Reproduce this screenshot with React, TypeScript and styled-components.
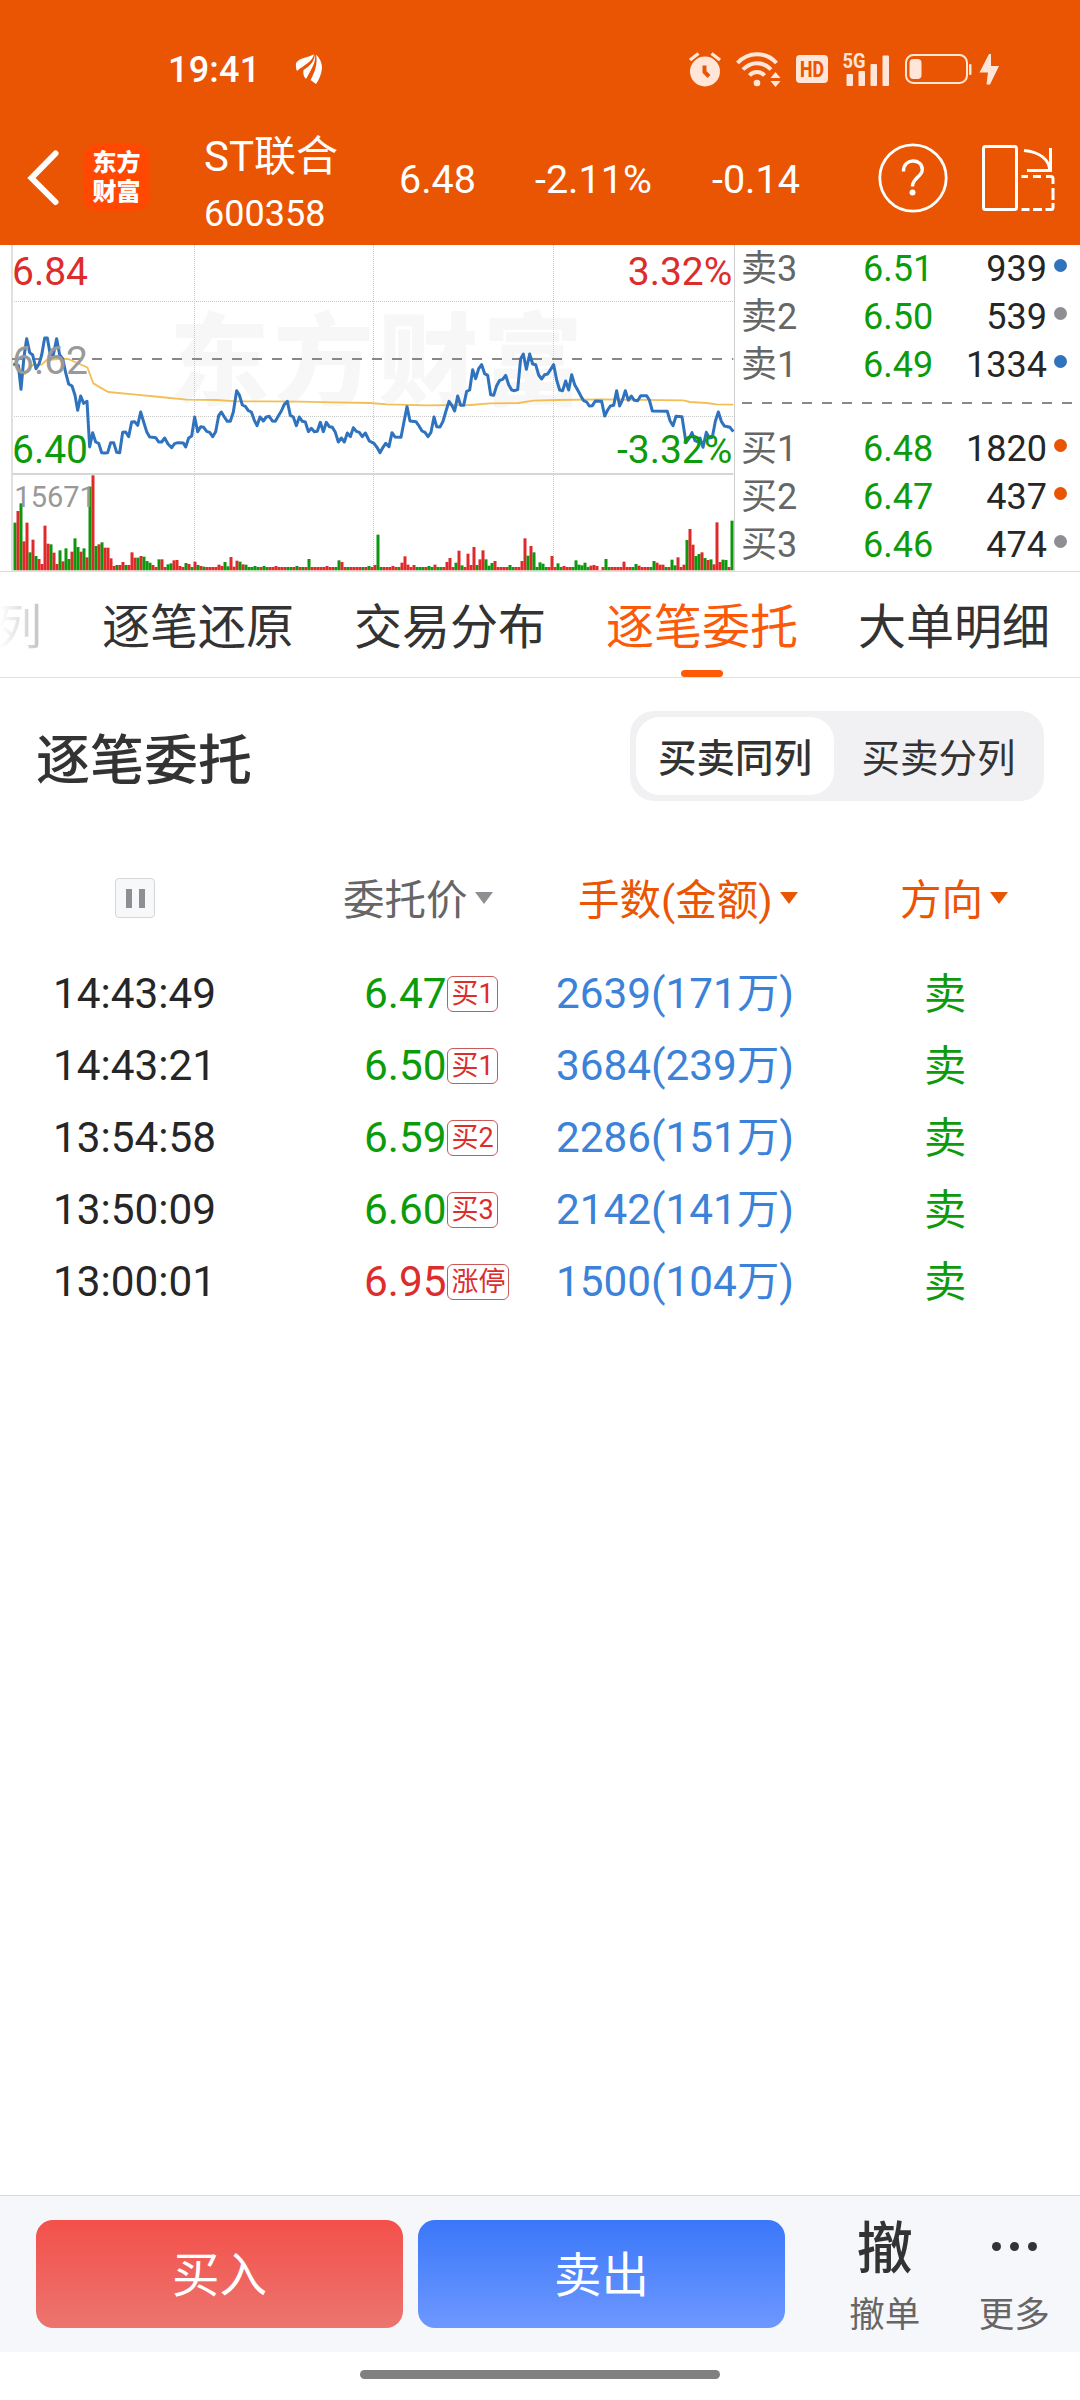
import React from "react";
import styled, { createGlobalStyle } from "styled-components";

const GREEN = "#0b9b0b";
const RED = "#dd2c2c";
const BRAND = "#ea5504";
const BLUE = "#2f72bd";

const GlobalStyle = createGlobalStyle`
  * { box-sizing: border-box; }
  body {
    margin: 0;
    background: #fff;
    font-family: Roboto, "Noto Sans CJK SC", sans-serif;
    color: #262626;
  }
  svg { overflow: visible; }
`;

const Screen = styled.div`
  width: 1080px;
  height: 2400px;
  display: flex;
  flex-direction: column;
  background: #fff;
  overflow: hidden;
`;

/* ---------- header ---------- */

const Header = styled.header`
  height: 245px;
  flex: none;
  background: ${BRAND};
  color: #fff;
  display: flex;
  flex-direction: column;
`;

const StatusBar = styled.div`
  height: 110px;
  padding: 28px 80px 0 168px;
  display: flex;
  align-items: center;
  justify-content: space-between;
`;

const StatusGroup = styled.div<{ $gap: number }>`
  display: flex;
  align-items: center;
  gap: ${(p) => p.$gap}px;
  color: #ffe6d9;
`;

const Clock = styled.span`
  font-size: 36px;
  line-height: 40px;
  font-weight: 500;
  color: #fff;
  padding-top: 2px;
  letter-spacing: 0.2px;
`;

const NavBar = styled.div`
  height: 135px;
  display: grid;
  grid-template-columns: 83px 121px 172px 125px 158px 219px 104px 1fr;
  align-items: center;
`;

const NavSlot = styled.div<{ $left?: number }>`
  display: flex;
  padding-left: ${(p) => p.$left ?? 0}px;
`;

const AppLogo = styled.div`
  width: 67px;
  height: 67px;
  padding-bottom: 5px;
  border-radius: 15px;
  background: #ff4800;
  display: flex;
  flex-direction: column;
  align-items: center;
  justify-content: center;
  gap: 4px;
  font: 900 24px/25px "Noto Sans CJK SC", sans-serif;
`;

const StockTitle = styled.div`
  display: flex;
  flex-direction: column;
  padding-top: 10px;
`;

const StockName = styled.span`
  font-size: 42px;
  line-height: 60px;
  height: 62px;
`;

const StockCode = styled.span`
  font-size: 36px;
  line-height: 50px;
  height: 50px;
`;

const Quote = styled.span`
  font-size: 39.5px;
  line-height: 50px;
  padding-top: 5px;
  white-space: nowrap;
`;

/* ---------- market panel ---------- */

const Market = styled.section`
  height: 327px;
  flex: none;
  display: flex;
  border-bottom: 1px solid #dcdcdc;
`;

const ChartBox = styled.div`
  width: 735px;
  height: 326px;
  flex: none;
  border-right: 1px solid #cfcfcf;
`;

const Book = styled.div`
  width: 345px;
  flex: none;
  display: flex;
  flex-direction: column;
  padding: 0 13px 0 6px;
`;

const BookRow = styled.div`
  height: 48px;
  display: grid;
  grid-template-columns: 122px 184px 13px;
  align-items: center;
  font-size: 36px;
  line-height: 48px;
`;

const BookLabel = styled.span`
  height: 48px;
  color: #666;
`;

const BookPair = styled.span`
  display: flex;
  justify-content: space-between;
  padding-right: 0;
`;

const BookPrice = styled.span`
  color: ${GREEN};
`;

const Dot = styled.i<{ $color: string }>`
  width: 13px;
  height: 13px;
  border-radius: 50%;
  background: ${(p) => p.$color};
  margin: -7px 0 0 7px;
`;

const BookDivider = styled.div`
  height: 36px;
  padding-top: 13px;
  &::before {
    content: "";
    display: block;
    width: 330px;
    margin-left: 1px;
    height: 2px;
    background: repeating-linear-gradient(90deg, #888 0 10px, transparent 10px 20px);
  }
`;

/* ---------- tabs ---------- */

const Tabs = styled.nav`
  height: 106px;
  flex: none;
  display: flex;
  gap: 60px;
  border-bottom: 1px solid #e0e0e0;
  overflow: hidden;
  font-size: 48px;
  line-height: 112px;
  color: #333;
`;

const Tab = styled.div<{ $active?: boolean; $peek?: boolean }>`
  width: ${(p) => (p.$peek ? 42 : 192)}px;
  flex: none;
  height: 105px;
  white-space: nowrap;
  display: flex;
  flex-direction: column;
  align-items: ${(p) => (p.$peek ? "flex-end" : "center")};
  color: ${(p) => (p.$active ? "#fa5a0a" : "inherit")};
  ${(p) =>
    p.$peek &&
    "background: linear-gradient(90deg, #fff 0, #c4c4c4 40px); background-clip: text; color: transparent;"}
`;

const TabText = styled.span`
  height: 98px;
`;

const TabMark = styled.i`
  width: 42px;
  height: 7px;
  border-radius: 4px;
  background: #ff5a08;
`;

/* ---------- orders ---------- */

const TitleRow = styled.div`
  height: 90px;
  flex: none;
  margin: 33px 36px 0;
  display: flex;
  justify-content: space-between;
  align-items: center;
`;

const Title = styled.h1`
  margin: 0;
  padding-top: 11px;
  font-size: 54px;
  line-height: 80px;
  font-weight: 500;
  color: #333;
`;

const Segmented = styled.div`
  width: 414px;
  height: 90px;
  padding: 6px;
  border-radius: 24px;
  background: #f1f1f4;
  display: flex;
`;

const Segment = styled.div<{ $on?: boolean }>`
  flex: ${(p) => (p.$on ? "0 0 198px" : "1")};
  height: 78px;
  border-radius: 24px;
  background: ${(p) => (p.$on ? "#fff" : "transparent")};
  font-size: 38.5px;
  line-height: 83px;
  font-weight: ${(p) => (p.$on ? 500 : 400)};
  text-align: center;
  padding-left: ${(p) => (p.$on ? 0 : 5)}px;
  color: #333;
`;

const OrderTable = styled.div`
  flex: 1;
  padding-top: 61px;
`;

const HeadRow = styled.div`
  height: 72px;
  display: grid;
  grid-template-columns: 343px 235px 322px 1fr;
  align-items: center;
  margin-bottom: 24px;
`;

const PauseButton = styled.div`
  width: 40px;
  height: 40px;
  margin-left: 115px;
  border: 1px solid #d6d7db;
  border-radius: 4px;
  background: #f7f8fa;
  display: flex;
  align-items: center;
  justify-content: center;
  gap: 7px;
  &::before, &::after {
    content: "";
    width: 6px;
    height: 19px;
    background: #8e8e93;
  }
`;

const HeadCell = styled.div<{ $active?: boolean }>`
  display: flex;
  align-items: center;
  gap: 7px;
  padding-top: 5px;
  font-size: 41.5px;
  line-height: 60px;
  height: 65px;
  white-space: nowrap;
  color: ${(p) => (p.$active ? BRAND : "#666")};
  &::after {
    content: "";
    border: 9px solid transparent;
    border-top: 12px solid ${(p) => (p.$active ? BRAND : "#8e8e93")};
    border-bottom: 0;
    margin-top: -6px;
  }
`;

const OrderRow = styled.div`
  height: 72px;
  display: grid;
  grid-template-columns: 311px 192px 368px 1fr;
  align-items: center;
  padding-left: 53px;
  font-size: 42.3px;
  line-height: 72px;
`;

const Cell = styled.div<{ $color?: string; $down?: number }>`
  height: 72px;
  display: flex;
  align-items: center;
  padding-top: ${(p) => p.$down ?? 0}px;
  white-space: nowrap;
  color: ${(p) => p.$color ?? "#262626"};
`;

const Badge = styled.span`
  height: 36px;
  margin: 0 0 0 1px;
  padding: 0 3px;
  border: 1px solid #c85a5a;
  border-radius: 6px;
  font-size: 27px;
  line-height: 35px;
  color: ${RED};
`;

/* ---------- footer ---------- */

const ActionBar = styled.footer`
  height: 157px;
  flex: none;
  border-top: 1px solid #d8d9db;
  background: #f6f7fa;
  display: flex;
  padding: 24px 0 0 36px;
`;

const TradeButton = styled.div<{ $from: string; $to: string }>`
  width: 367px;
  height: 108px;
  flex: none;
  margin-right: 15px;
  border-radius: 17px;
  background: linear-gradient(${(p) => p.$from}, ${(p) => p.$to});
  color: #fff;
  font-size: 47.5px;
  line-height: 113px;
  text-align: center;
`;

const Tools = styled.div`
  flex: 1;
  display: flex;
  padding-left: 20px;
`;

const Tool = styled.div`
  width: 129.5px;
  display: flex;
  flex-direction: column;
  align-items: center;
  font-size: 35.500px;
  line-height: 50px;
  color: #666;
`;

const ToolIcon = styled.span`
  height: 68px;
  display: flex;
  align-items: center;
  gap: 9px;
  font-size: 56px;
  line-height: 54px;
  font-weight: 500;
  color: #333;
  margin-top: -5px;
  margin-bottom: 7px;
`;

const MoreDot = styled.i`
  width: 9px;
  height: 9px;
  margin-top: -6px;
  border-radius: 50%;
  background: #333;
`;

const HomeArea = styled.div`
  height: 48px;
  flex: none;
  display: flex;
  justify-content: center;
  padding-top: 18px;
`;

const HomeBar = styled.i`
  width: 360px;
  height: 9px;
  border-radius: 5px;
  background: #808080;
`;

/* ---------- chart data: plot units are thirds of a pixel ---------- */

const PRICE =
  "40,372 48,374 55,376 63,448 72,350 80,296 89,338 98,345 108,386 117,372 125,345 134,294 142,294 151,345 160,345 170,296 179,345 188,356 197,398 206,432 216,438 225,466 233,511 242,468 251,490 261,484 269,621 278,578 287,606 296,610 305,638 314,639 323,638 332,608 341,608 350,637 359,638 368,577 377,576 386,590 395,546 404,545 413,556 422,516 431,546 440,575 449,591 458,592 467,593 476,606 485,606 494,594 504,612 515,623 524,611 534,608 550,609 557,621 566,594 575,588 584,531 593,575 602,560 611,562 620,574 629,577 638,590 647,575 656,527 664,516 673,531 682,544 691,544 700,516 710,452 718,465 727,495 736,499 745,512 754,516 763,541 771,557 780,531 790,543 799,531 808,529 817,543 826,544 835,528 844,513 853,493 862,484 871,526 880,531 889,557 898,531 907,544 916,546 925,575 934,565 943,575 952,574 961,547 970,575 979,547 988,560 997,562 1006,577 1015,606 1024,594 1033,606 1042,579 1051,590 1060,563 1069,574 1078,577 1087,590 1096,579 1108,603 " +
  "1122,610 1131,622 1140,638 1149,622 1157,610 1167,620 1176,578 1185,591 1203,592 1212,545 1221,500 1230,543 1248,545 1257,558 1266,573 1275,577 1284,590 1293,577 1302,531 1310,560 1320,561 1329,544 1338,513 1347,484 1356,497 1364,513 1373,468 1382,496 1391,496 1400,454 1409,450 1418,389 1427,416 1436,386 1445,374 1454,401 1463,406 1472,464 1481,466 1490,437 1499,421 1508,418 1517,406 1526,434 1535,450 1544,452 1553,449 1562,356 1570,342 1579,388 1589,342 1598,372 1607,374 1616,405 1625,417 1634,404 1643,402 1652,388 1661,374 1670,420 1679,450 1688,452 1697,423 1706,450 1715,404 1724,434 1733,450 1742,467 1751,482 1760,486 1768,498 1777,497 1786,483 1805,484 1814,528 1823,510 1831,498 1841,496 1850,452 1859,498 1868,478 1876,452 1885,481 1894,468 1903,481 1913,482 1922,467 1940,467 1948,480 1957,513 2002,514 2010,542 2019,557 2028,529 2046,530 2058,608 2067,596 2076,578 2085,602 2094,606 2100,594 2109,622 2119,577 2128,594 2137,592 2146,544 2155,516 2164,544 2173,558 2190,562 2200,575";

const AVERAGE =
  "40,372 55,376 65,400 75,402 85,386 100,374 125,374 140,360 175,357 205,357 225,366 262,382 280,430 300,442 325,456 400,463 480,471 560,479 650,480 710,484 800,484 900,485 1000,487 1110,489 1160,493 1280,496 1410,495 1470,490 1555,489 1600,482 1670,480 1810,478 2050,481 2070,486 2120,489 2150,493 2200,494";

/* opening minutes: colour letter + bar height */
const VOLUME_OPEN =
  "g142 r177 g200 r86 r142 g53 r91 g42 r33 r18 r133 r79 g77 r52 r18 g59 r26 g65 g33 r55 g95 g69 r55 g65 r38 g250 r284 g72 r77 g83 r67 r67 r35 r12 g15 r15 r24 g15 r15 r53 r37 g37 r42 g40 g27 g22 r15 r9 g32 r32 r9 g17 g20 r29 r30 r12 r9 g21 r18 g9 r25 g15 r12 g10 r9 r9 r9 r9 r16 r12 g24 g11 r39 r10 r28 g25 r17 g16 g9 g9";

const SPIKES: Record<number, [string, number]> = {
  80: ["g", 12], 83: ["g", 12], 87: ["r", 12], 94: ["g", 12], 98: ["g", 33], 104: ["r", 12],
  108: ["g", 29], 109: ["r", 24], 118: ["g", 12], 120: ["r", 15], 121: ["g", 106], 126: ["r", 12],
  129: ["r", 22], 130: ["r", 41], 131: ["r", 16], 133: ["r", 15], 138: ["g", 12], 140: ["r", 16],
  144: ["r", 24], 145: ["r", 36], 147: ["g", 22], 148: ["r", 58], 149: ["g", 14], 151: ["r", 49],
  152: ["r", 15], 153: ["r", 69], 154: ["g", 15], 155: ["r", 32], 156: ["r", 59], 157: ["g", 32],
  158: ["g", 13], 159: ["g", 21], 160: ["r", 27], 165: ["g", 15], 169: ["r", 27], 170: ["r", 95],
  171: ["g", 43], 172: ["r", 72], 173: ["g", 53], 175: ["g", 23], 176: ["g", 19], 179: ["r", 42],
  181: ["g", 20], 183: ["r", 12], 187: ["g", 29], 188: ["g", 16], 189: ["g", 14], 190: ["g", 22],
  192: ["r", 13], 193: ["r", 15], 194: ["r", 12], 195: ["r", 0], 197: ["g", 33], 203: ["r", 25],
  207: ["g", 18], 208: ["r", 13], 213: ["g", 27], 214: ["r", 22], 215: ["r", 16], 216: ["r", 16],
  219: ["g", 31], 220: ["g", 14], 221: ["r", 38], 223: ["r", 16], 224: ["g", 90], 225: ["r", 123],
  226: ["r", 76], 227: ["g", 42], 228: ["g", 48], 229: ["r", 53], 230: ["g", 36], 231: ["r", 30],
  232: ["g", 32], 233: ["r", 17], 234: ["r", 143], 235: ["r", 24], 236: ["g", 31], 237: ["g", 30],
  238: ["r", 9], 239: ["g", 148],
};

const QUIET_GREEN = new Set([79, 81, 84, 91, 92, 96, 107, 111, 116, 122, 128, 134, 135, 136, 139, 141, 142, 166, 174, 177, 182, 186, 191, 198, 206, 212, 217]);

const volumeBars = (() => {
  const open = VOLUME_OPEN.split(" ").map((t): [string, number] => [t[0], Number(t.slice(1))]);
  return Array.from({ length: 240 }, (_, i): [string, number] =>
    open[i] && i < 80 ? open[i] : SPIKES[i] ?? [QUIET_GREEN.has(i) ? "g" : "r", 9]
  );
})();

const barColor = (c: string) => (c === "g" ? "#0f960f" : "#e02a2a");

function PriceChart() {
  return (
    <svg width="734" height="326" viewBox="0 15 2202 978" fontFamily="Roboto, sans-serif">
      <text x="508" y="470" fontSize="300" fontWeight="900" fontFamily="'Noto Sans CJK SC', sans-serif" fill="#f7f7f7" textLength="1240">
        东方财富
      </text>
      <g stroke="#c9c9c9" strokeWidth="3" strokeDasharray="3 3">
        <path d="M36 184.500H2200M36 529.500H2200M583.500 15V990M1120.500 15V990M1660.500 15V990" />
      </g>
      <path d="M36 15V993" stroke="#e0e0e0" strokeWidth="6" />
      <path d="M36 702H2200" stroke="#d6d6d6" strokeWidth="6" />
      <path d="M36 357H2200" stroke="#888" strokeWidth="6" strokeDasharray="30 30" />
      {volumeBars.map(([c, h], i) => (
        <g key={i} fill={barColor(c)}>
          <rect x={40.5 + i * 9} y={990 - h} width="9" height={h} />
          <rect x={40.5 + i * 9} y="990" width="9" height="3" opacity="0.3" />
        </g>
      ))}
      <polyline points={AVERAGE} fill="none" stroke="#f3bf55" strokeWidth="5.500" />
      <polyline points={PRICE} fill="none" stroke={BLUE} strokeWidth="9" strokeLinejoin="round" />
      <g fontSize="117">
        <text x="36" y="134" fill={RED}>6.84</text>
        <text x="2197" y="134" fill={RED} textAnchor="end">3.32%</text>
        <text x="36" y="401" fill="#999">6.62</text>
        <text x="36" y="668" fill={GREEN}>6.40</text>
        <text x="2197" y="668" fill={GREEN} textAnchor="end">-3.32%</text>
        <text x="43" y="800" fill="#999" fontSize="87">15671</text>
      </g>
    </svg>
  );
}

/* ---------- icons ---------- */

const LeafIcon = () => (
  <svg width="26" height="30" viewBox="0 0 26 30" fill="#fff">
    <path d="M0 9C4 3.500 11 4 18 .3 16.500 8 8 11 1 17 0 15-.3 12 0 9z" />
    <path d="M19 .5C20.300 8 15.500 15 10 25 7.300 22.500 7 19 7.500 16 14 12 18 8 19 .5z" />
    <path d="M20.200 .5C24 4 26 9 26 14 25.500 20 23 26 20 30 18 28.500 16.500 27.500 14.500 26 19.500 17 21.500 10 20.200 .5z" />
  </svg>
);

const AlarmIcon = () => (
  <svg width="32" height="35" viewBox="0 0 32 35" fill="none" stroke="currentColor">
    <circle cx="16" cy="19.500" r="15" fill="currentColor" stroke="none" />
    <path d="M1 8 9.500 1.500M31 8 22.500 1.500" strokeWidth="3.400" />
    <path d="M15.500 13.500V20l4.500 4.500" stroke={BRAND} strokeWidth="4" />
  </svg>
);

const WifiIcon = () => (
  <svg width="45" height="35" viewBox="0 0 45 35" fill="none" stroke="currentColor" strokeWidth="4">
    <path d="M1.500 11C12-.8 30-.8 40.500 11M7 17.500c8-8.500 20-8.500 28 0M13.500 23.500c4-4.600 11-4.600 15 0" />
    <circle cx="21" cy="31" r="3.300" fill="currentColor" stroke="none" />
    <path d="M34.500 26h10L39.500 20zM34.500 29h10L39.500 35z" fill="currentColor" stroke="none" />
  </svg>
);

const HdIcon = () => (
  <svg width="32" height="28" viewBox="0 0 32 28">
    <rect width="32" height="28" rx="4" fill="currentColor" />
    <text x="4" y="21.800" fontSize="22" fontWeight="800" fontFamily="Roboto, sans-serif" fill={BRAND} textLength="24" lengthAdjust="spacingAndGlyphs">
      HD
    </text>
  </svg>
);

const SignalIcon = () => (
  <svg width="47" height="33" viewBox="0 0 47 33" fill="currentColor">
    <text x="-0.500" y="15" fontSize="20" fontWeight="700" fontFamily="Roboto, sans-serif" textLength="23" lengthAdjust="spacingAndGlyphs">
      5G
    </text>
    <rect x="3.500" y="21" width="6.500" height="12" rx="1" />
    <rect x="15.500" y="18" width="6.500" height="15" rx="1" />
    <rect x="27.500" y="11" width="6.500" height="22" rx="1" />
    <rect x="39.500" y="2.500" width="6.500" height="30.500" rx="1" />
  </svg>
);

const BatteryIcon = () => (
  <svg width="95" height="31" viewBox="0 0 95 31">
    <rect x="1" y="1" width="61" height="28" rx="7.500" fill="none" stroke="currentColor" strokeWidth="2" />
    <rect x="4.500" y="5" width="12" height="20" rx="4" fill="currentColor" />
    <rect x="64" y="10" width="2.500" height="11" rx="1" fill="currentColor" />
    <path d="M84 0 74.500 18.500H83L81.500 30.500H85L94 12H86V0z" fill="currentColor" />
  </svg>
);

const BackIcon = () => (
  <svg width="34" height="56" viewBox="0 0 34 56" fill="none" stroke="#fff" strokeWidth="6" strokeLinecap="round" strokeLinejoin="miter">
    <path d="M29.500 3.500 5.500 28 29.500 52" />
  </svg>
);

const HelpIcon = () => (
  <svg width="70" height="70" viewBox="0 0 70 70" fill="none" stroke="#fff">
    <circle cx="35" cy="35" r="33.200" strokeWidth="2.800" />
    <path d="M25.500 28.500C25 14.500 44.500 15 44.300 26.500 44.200 34 34.500 34.500 34.500 43.500" strokeWidth="3.400" />
    <circle cx="34.500" cy="49.500" r="3" fill="#fff" stroke="none" />
  </svg>
);

const RotateIcon = () => (
  <svg width="74" height="68" viewBox="0 0 74 68" fill="none" stroke="#fff" strokeWidth="3">
    <rect x="1.500" y="2.500" width="33" height="63" rx="2" />
    <path d="M42 6.500C57 8 67 15 68 27M68.500 4V28M45 26.500H70" />
    <path d="M39.500 32.500h6.500M51 32.500h8M64 32.500h5a2 2 0 0 1 2 2V40M71 44v12M39.500 65.500h8M51 65.500h9M63.500 65.500h5.500a2 2 0 0 0 2-2V59" />
  </svg>
);

/* ---------- content ---------- */

const book = {
  asks: [
    ["卖3", "6.51", "939", BLUE],
    ["卖2", "6.50", "539", "#8e8e93"],
    ["卖1", "6.49", "1334", BLUE],
  ],
  bids: [
    ["买1", "6.48", "1820", BRAND],
    ["买2", "6.47", "437", BRAND],
    ["买3", "6.46", "474", "#8e8e93"],
  ],
};

const orders = [
  { time: "14:43:49", price: "6.47", tag: "买1", size: "2639(171万)" },
  { time: "14:43:21", price: "6.50", tag: "买1", size: "3684(239万)" },
  { time: "13:54:58", price: "6.59", tag: "买2", size: "2286(151万)" },
  { time: "13:50:09", price: "6.60", tag: "买3", size: "2142(141万)" },
  { time: "13:00:01", price: "6.95", tag: "涨停", size: "1500(104万)", up: true },
];

const BookRows = ({ rows }: { rows: string[][] }) => (
  <>
    {rows.map(([label, price, qty, color]) => (
      <BookRow key={label}>
        <BookLabel>{label}</BookLabel>
        <BookPair>
          <BookPrice>{price}</BookPrice>
          <span>{qty}</span>
        </BookPair>
        <Dot $color={color} />
      </BookRow>
    ))}
  </>
);

export default function App() {
  return (
    <>
      <GlobalStyle />
      <Screen>
        <Header>
          <StatusBar>
            <StatusGroup $gap={36}>
              <Clock>19:41</Clock>
              <LeafIcon />
            </StatusGroup>
            <StatusGroup $gap={15}>
              <AlarmIcon />
              <WifiIcon />
              <HdIcon />
              <SignalIcon />
              <BatteryIcon />
            </StatusGroup>
          </StatusBar>
          <NavBar>
            <NavSlot $left={26}><BackIcon /></NavSlot>
            <AppLogo>
              <span>东方</span>
              <span>财富</span>
            </AppLogo>
            <StockTitle>
              <StockName>ST联合</StockName>
              <StockCode>600358</StockCode>
            </StockTitle>
            <NavSlot $left={23}><Quote>6.48</Quote></NavSlot>
            <NavSlot $left={34}><Quote>-2.11%</Quote></NavSlot>
            <NavSlot $left={53}><Quote>-0.14</Quote></NavSlot>
            <HelpIcon />
            <RotateIcon />
          </NavBar>
        </Header>

        <Market>
          <ChartBox><PriceChart /></ChartBox>
          <Book>
            <BookRows rows={book.asks} />
            <BookDivider />
            <BookRows rows={book.bids} />
          </Book>
        </Market>

        <Tabs>
          <Tab $peek><TabText>列</TabText></Tab>
          <Tab><TabText>逐笔还原</TabText></Tab>
          <Tab><TabText>交易分布</TabText></Tab>
          <Tab $active>
            <TabText>逐笔委托</TabText>
            <TabMark />
          </Tab>
          <Tab><TabText>大单明细</TabText></Tab>
        </Tabs>

        <TitleRow>
          <Title>逐笔委托</Title>
          <Segmented>
            <Segment $on>买卖同列</Segment>
            <Segment>买卖分列</Segment>
          </Segmented>
        </TitleRow>

        <OrderTable>
          <HeadRow>
            <PauseButton />
            <HeadCell>委托价</HeadCell>
            <HeadCell $active>手数(金额)</HeadCell>
            <HeadCell $active>方向</HeadCell>
          </HeadRow>
          {orders.map((o) => (
            <OrderRow key={o.time}>
              <Cell>{o.time}</Cell>
              <Cell $color={o.up ? RED : GREEN}>
                {o.price}
                <Badge>{o.tag}</Badge>
              </Cell>
              <Cell $color="#3b82d8">{o.size}</Cell>
              <Cell $color={GREEN} $down={1}>卖</Cell>
            </OrderRow>
          ))}
        </OrderTable>

        <ActionBar>
          <TradeButton $from="#f4504a" $to="#ec756f">买入</TradeButton>
          <TradeButton $from="#3a77f9" $to="#6d98ff">卖出</TradeButton>
          <Tools>
            <Tool>
              <ToolIcon>撤</ToolIcon>
              撤单
            </Tool>
            <Tool>
              <ToolIcon>
                <MoreDot />
                <MoreDot />
                <MoreDot />
              </ToolIcon>
              更多
            </Tool>
          </Tools>
        </ActionBar>
        <HomeArea><HomeBar /></HomeArea>
      </Screen>
    </>
  );
}
